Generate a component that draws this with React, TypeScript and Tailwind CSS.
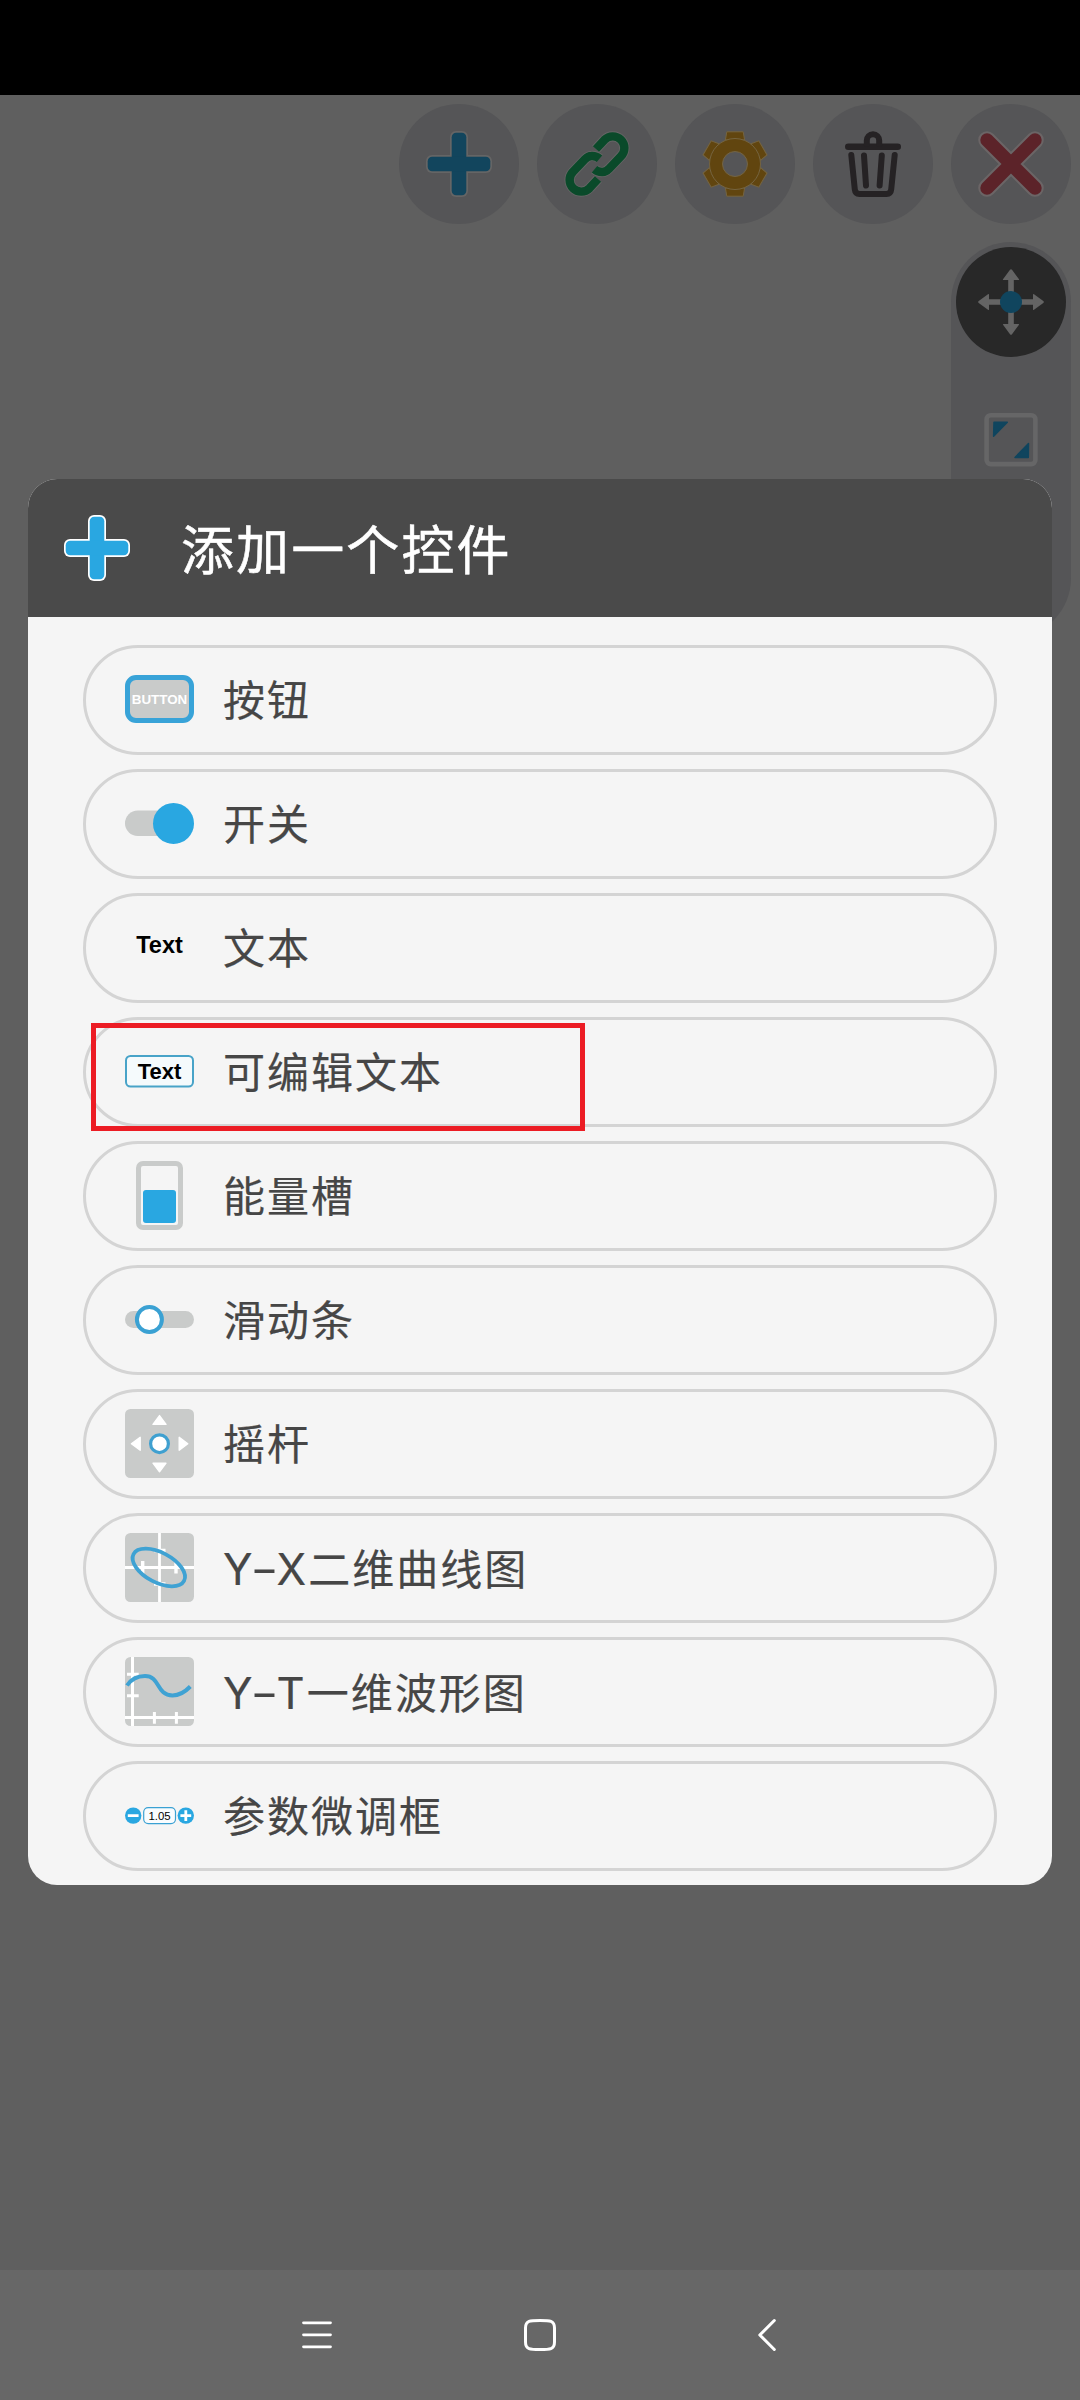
import type { ReactNode } from "react";

const BLUE = "#29a7e1";
const GREY = "#c9cbca";
const DIM_LINE = "#656565";

function PlusIcon({ fill, outline }: { fill: string; outline: string }) {
  return (
    <svg viewBox="0 0 66 66" className="size-[66px]">
      <g fill={outline}>
        <rect x="24" y="0" width="18" height="66" rx="6" />
        <rect x="0" y="24" width="66" height="18" rx="6" />
      </g>
      <g fill={fill}>
        <rect x="25.7" y="1.7" width="14.6" height="62.6" rx="4.5" />
        <rect x="1.7" y="25.7" width="62.6" height="14.6" rx="4.5" />
      </g>
    </svg>
  );
}

const LINK_D = "M32 18 L40.5 8.8 A11.6 11.6 0 0 1 57 25.2 L45.2 37.6 Q42 41 38.5 41 Q34 41.3 30.5 38.3";

function LinkIcon() {
  return (
    <svg viewBox="0 0 66 66" className="size-[66px]" fill="none">
      <path d={LINK_D} stroke={DIM_LINE} strokeWidth="10.2" />
      <path d={LINK_D} stroke="#0a4a2a" strokeWidth="8.4" />
      <g transform="rotate(180 33 33)">
        <path d={LINK_D} stroke={DIM_LINE} strokeWidth="10.2" />
        <path d={LINK_D} stroke="#0a4a2a" strokeWidth="8.4" />
      </g>
    </svg>
  );
}

function GearIcon() {
  return (
    <svg viewBox="-33 -33 66 66" className="size-[66px]" fill="#61450f" stroke="#756440" strokeWidth="1">
      {[0, 60, 120, 180, 240, 300].map((deg) => (
        <path key={deg} d="M-9.6 -24 L-8.2 -32.2 H8.2 L9.6 -24 Z" transform={`rotate(${deg})`} />
      ))}
      <circle r="25.5" />
      <circle r="12.5" fill="#555557" />
    </svg>
  );
}

function TrashIcon() {
  return (
    <svg
      viewBox="0 0 66 66"
      className="size-[66px]"
      fill="none"
      stroke="#252224"
      strokeWidth="6"
      strokeLinecap="round"
      strokeLinejoin="round"
    >
      <path d="M8.3 15.7 H57.7" strokeWidth="6.6" />
      <path d="M26.8 13 V9.5 a6.2 6.2 0 0 1 12.4 0 V13" />
      <path d="M11.3 24 L14.8 58.5 Q15.3 63 19.5 63 H46.5 Q50.7 63 51.2 58.5 L54.7 24" />
      <path d="M24 24.5 L26 54.5 M41.8 24.5 L39.6 54.5" />
    </svg>
  );
}

function CloseIcon() {
  return (
    <svg viewBox="0 0 66 66" className="size-[66px]" strokeLinecap="round">
      <path d="M9 9 L57 57 M57 9 L9 57" stroke="#6b6566" strokeWidth="17.5" />
      <path d="M9 9 L57 57 M57 9 L9 57" stroke="#5c2329" strokeWidth="13.4" />
    </svg>
  );
}

function MoveIcon() {
  return (
    <svg viewBox="-33 -33 66 66" className="size-[66px]" fill="#646464">
      {[0, 90, 180, 270].map((deg) => (
        <path
          key={deg}
          d="M-2.8 -8 V-22 H-7.4 Q-8.6 -22 -7.8 -23 L-1 -32.3 Q0 -33.4 1 -32.3 L7.8 -23 Q8.6 -22 7.4 -22 H2.8 V-8 Z"
          transform={`rotate(${deg})`}
        />
      ))}
      <circle r="11" fill="#10455e" />
    </svg>
  );
}

function ResizeIcon() {
  return (
    <svg viewBox="0 0 66 66" className="size-[66px]">
      <rect x="8.6" y="8.3" width="48.8" height="48.8" rx="4" fill="none" stroke="#666667" strokeWidth="4.6" />
      <path
        d="M16 15.3 H29.3 L15.6 29.3 Z M50.3 50.4 H37 L50.5 36.6 Z"
        fill="#10455e"
        stroke="#10455e"
        strokeLinejoin="round"
        strokeWidth="1.5"
      />
    </svg>
  );
}

function Glyph({ children }: { children: ReactNode }) {
  return (
    <svg viewBox="0 0 69 69" className="mb-px size-[69px] shrink-0">
      {children}
    </svg>
  );
}

function Plate() {
  return <rect width="69" height="69" rx="5.5" fill={GREY} />;
}

const ITEMS: { axes?: [string, string]; label: string; icon: ReactNode }[] = [
  {
    label: "按钮",
    icon: (
      <>
        <rect x="2.5" y="12.5" width="64" height="43" rx="8.5" fill={GREY} stroke="#38a3d8" strokeWidth="5" />
        <text x="34.5" y="39" textAnchor="middle" fontSize="13.4" fontWeight="700" fill="#fff">BUTTON</text>
      </>
    ),
  },
  {
    label: "开关",
    icon: (
      <>
        <rect x="0" y="21.5" width="60" height="25.6" rx="12.8" fill={GREY} />
        <circle cx="48.5" cy="34.4" r="20.5" fill={BLUE} />
      </>
    ),
  },
  {
    label: "文本",
    icon: <text x="34.5" y="40" textAnchor="middle" fontSize="23.5" fontWeight="700">Text</text>,
  },
  {
    label: "可编辑文本",
    icon: (
      <>
        <rect x="1" y="19" width="67" height="30.5" rx="4.5" fill="#f5fafc" stroke="#48a3c8" strokeWidth="2" />
        <text x="34.5" y="42.3" textAnchor="middle" fontSize="22" fontWeight="700">Text</text>
      </>
    ),
  },
  {
    label: "能量槽",
    icon: (
      <>
        <rect x="13.5" y="2.5" width="42" height="64" rx="4.5" fill="none" stroke={GREY} strokeWidth="5" />
        <rect x="18" y="29" width="33" height="33" rx="3" fill={BLUE} />
      </>
    ),
  },
  {
    label: "滑动条",
    icon: (
      <>
        <rect y="26" width="69" height="17" rx="8.5" fill={GREY} />
        <circle cx="24.4" cy="34.5" r="12.5" fill="#fff" stroke="#3aa1d3" strokeWidth="4" />
      </>
    ),
  },
  {
    label: "摇杆",
    icon: (
      <>
        <Plate />
        <g fill="#fff" stroke="#fff" strokeWidth="1.4" strokeLinejoin="round">
          <path d="M34.5 6.6 L41 15.4 H28 Z" />
          <path d="M34.5 62.8 L41 54.2 H28 Z" />
          <path d="M6.4 34.8 L15.2 28.3 V41.3 Z" />
          <path d="M62.8 34.8 L54.2 28.3 V41.3 Z" />
        </g>
        <circle cx="34.5" cy="34.7" r="8.9" fill="#fff" stroke="#3fa0d0" strokeWidth="3.2" />
      </>
    ),
  },
  {
    axes: ["Y", "X"],
    label: "二维曲线图",
    icon: (
      <>
        <Plate />
        <path d="M34.5 0 V69 M0 34.5 H69" stroke="#fff" strokeWidth="2.8" />
        <path d="M17.7 28 V40.5 M51 28 V40.5 M29 17.5 H40.5 M29 51 H40.5" stroke="#fff" strokeWidth="3.4" />
        <ellipse
          cx="33.8"
          cy="34.5"
          rx="28.6"
          ry="14.9"
          transform="rotate(28 33.8 34.5)"
          fill="none"
          stroke="#3fa2d3"
          strokeWidth="3.8"
        />
      </>
    ),
  },
  {
    axes: ["Y", "T"],
    label: "一维波形图",
    icon: (
      <>
        <Plate />
        <path d="M7.5 0 V69 M0 60.6 H69" stroke="#fff" strokeWidth="3" />
        <path d="M2 17.2 H13.7 M2 38.8 H13.7 M29.4 55 V66.7 M51.4 55 V66.7" stroke="#fff" strokeWidth="3" />
        <path
          d="M2 28.5 C7 21 14 19 20 19 C35.5 19 31 38.5 47.5 38.5 C55 38.5 60 35 65.3 29.5"
          fill="none"
          stroke="#3fa2d3"
          strokeWidth="4"
        />
      </>
    ),
  },
  {
    label: "参数微调框",
    icon: (
      <>
        <circle cx="8.2" cy="34.6" r="8.2" fill={BLUE} />
        <circle cx="60.8" cy="34.6" r="8.2" fill={BLUE} />
        <path d="M2.8 34.6 H13.6 M55.4 34.6 H66.2 M60.8 29.2 V40" stroke="#fff" strokeWidth="2.8" />
        <rect x="18.7" y="26.6" width="31.8" height="16" rx="4.5" fill="#f9fcfe" stroke="#3aa1d3" strokeWidth="1.2" />
        <text x="34.5" y="39" textAnchor="middle" fontSize="11.4">1.05</text>
      </>
    ),
  },
];

function RoundButton({ children }: { children: ReactNode }) {
  return (
    <button className="flex size-[120px] items-center justify-center rounded-full bg-[#555557]">
      {children}
    </button>
  );
}

function Toolbar() {
  return (
    <div className="flex flex-col items-end gap-[18px] pt-[9px] pr-[9px]">
      <div className="flex gap-[18px]">
        <RoundButton><PlusIcon fill="#12455d" outline={DIM_LINE} /></RoundButton>
        <RoundButton><LinkIcon /></RoundButton>
        <RoundButton><GearIcon /></RoundButton>
        <RoundButton><TrashIcon /></RoundButton>
        <RoundButton><CloseIcon /></RoundButton>
      </div>
      <div className="flex h-[396px] w-[120px] flex-col items-center gap-[50px] rounded-full bg-[#555557] pt-[5px]">
        <div className="flex size-[110px] shrink-0 items-center justify-center rounded-full bg-[#282828]">
          <MoveIcon />
        </div>
        <ResizeIcon />
      </div>
    </div>
  );
}

function AddWidgetDialog() {
  return (
    <div className="absolute top-[479px] left-7 w-[1024px] overflow-hidden rounded-[29px] bg-[#f5f5f5]">
      <header className="flex h-[138px] items-center gap-[51px] bg-[#4a4a4a] pl-9">
        <PlusIcon fill={BLUE} outline="#fff" />
        <h1 className="pt-[7px] text-[53px] leading-[60px] tracking-[2.1px] text-white [-webkit-text-stroke:0.5px_#fff]">
          添加一个控件
        </h1>
      </header>
      <ul className="flex flex-col gap-3.5 px-[55px] pt-7 pb-3.5">
        {ITEMS.map((item) => (
          <li
            key={item.label}
            className="flex h-[110px] items-center gap-[29px] rounded-full border-[3px] border-[#d4d4d4] pl-[39px]"
          >
            <Glyph>{item.icon}</Glyph>
            <span className="flex items-baseline pt-1 text-[42px] leading-[50px] tracking-[2px] text-[#464646] [-webkit-text-stroke:0.2px_#464646]">
              {item.axes && (
                <span className="font-['Inter',sans-serif] text-[43.5px] leading-[48px]">
                  {item.axes[0]}
                  <span className="inline-block scale-x-140">-</span>
                  {item.axes[1]}
                </span>
              )}
              {item.label}
            </span>
          </li>
        ))}
      </ul>
    </div>
  );
}

function NavIcon({ children }: { children: ReactNode }) {
  return (
    <svg viewBox="0 0 40 40" className="size-10" fill="none" stroke="#fff" strokeWidth="3" strokeLinecap="round">
      {children}
    </svg>
  );
}

function NavBar() {
  return (
    <nav className="grid h-[130px] grid-cols-[223px_223px_223px] place-items-center justify-center bg-[#676767]">
      <NavIcon>
        <path d="M6.5 7.8 H33.5 M6.5 19.8 H33.5 M6.5 31.8 H33.5" strokeWidth="2.8" />
      </NavIcon>
      <NavIcon>
        <path d="M20 5.4 C30 5.4 34.5 5.4 34.5 13 V27 C34.5 34.6 30 34.6 20 34.6 C10 34.6 5.5 34.6 5.5 27 V13 C5.5 5.4 10 5.4 20 5.4 Z" />
      </NavIcon>
      <NavIcon>
        <path d="M31.3 5.5 L16.8 20 L31.3 34.5" strokeLinejoin="round" />
      </NavIcon>
    </nav>
  );
}

export default function App() {
  return (
    <div className="relative flex h-[2400px] w-[1080px] flex-col overflow-hidden bg-[#5f5f5f] font-['Liberation_Sans','Noto_Sans_CJK_SC',sans-serif]">
      <div className="h-[95px] shrink-0 bg-black" />
      <main className="flex-1">
        <Toolbar />
      </main>
      <NavBar />
      <AddWidgetDialog />
      {/* highlight around 可编辑文本 */}
      <div className="absolute top-[1023px] left-[91px] h-[108px] w-[494px] border-[5px] border-[#ec1c24]" />
    </div>
  );
}
